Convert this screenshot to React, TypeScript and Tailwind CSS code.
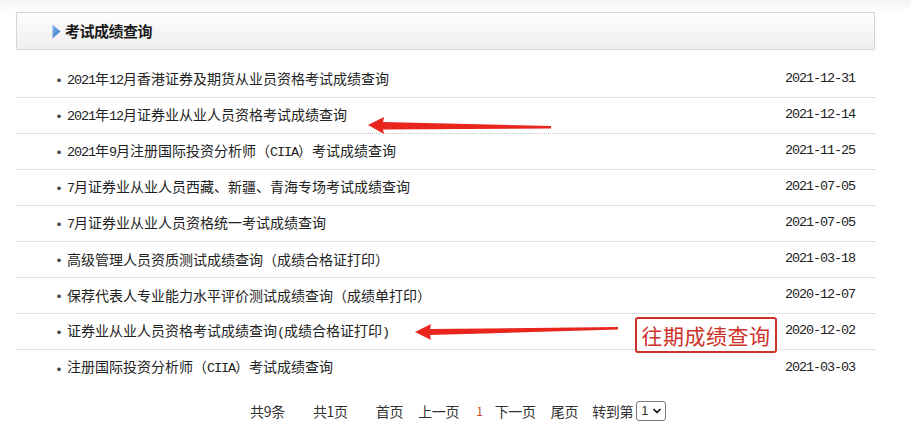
import { ChevronDown } from "lucide-react";

const items = [
  { title: "2021年12月香港证券及期货从业员资格考试成绩查询", date: "2021-12-31" },
  { title: "2021年12月证券业从业人员资格考试成绩查询", date: "2021-12-14" },
  { title: "2021年9月注册国际投资分析师（CIIA）考试成绩查询", date: "2021-11-25" },
  { title: "7月证券业从业人员西藏、新疆、青海专场考试成绩查询", date: "2021-07-05" },
  { title: "7月证券业从业人员资格统一考试成绩查询", date: "2021-07-05" },
  { title: "高级管理人员资质测试成绩查询（成绩合格证打印）", date: "2021-03-18" },
  { title: "保荐代表人专业能力水平评价测试成绩查询（成绩单打印）", date: "2020-12-07" },
  { title: "证券业从业人员资格考试成绩查询(成绩合格证打印)", date: "2020-12-02" },
  { title: "注册国际投资分析师（CIIA）考试成绩查询", date: "2021-03-03" },
];

// latin runs get the narrow mono face, like the old SimSun half-width glyphs
function MixedText({ text }: { text: string }) {
  const parts = text.match(/[\x20-\x7e]+|[^\x20-\x7e]+/g) || [];
  return (
    <>
      {parts.map((p, i) =>
        /^[\x20-\x7e]+$/.test(p) ? (
          <span key={i} className="font-['Liberation_Mono',monospace] text-[13.5px] tracking-[-1.1px]">
            {p}
          </span>
        ) : (
          <span key={i}>{p}</span>
        )
      )}
    </>
  );
}

export default function App() {
  return (
    <div className="relative w-[910px] h-[435px] bg-white overflow-hidden font-['Noto_Sans_CJK_SC',sans-serif] text-[#333]">
      <div className="bg-gradient-to-b from-[#f1f3f6] to-white h-[12px]" />
      <div className="ml-[16px] w-[859px]">
        {/* Section header */}
        <div className="h-[38px] border border-[#d5d5d5] bg-gradient-to-b from-[#fdfdfd] to-[#efeff1] flex items-center pl-[35px] shadow-[0_0_2px_rgba(0,0,0,0.06)]">
          <svg width="9" height="15" viewBox="0 0 9 15" className="mr-[4px]">
            <defs>
              <linearGradient id="tri" x1="0" y1="0" x2="1" y2="1">
                <stop offset="0" stopColor="#8ec0ef" />
                <stop offset="1" stopColor="#2a6cb8" />
              </linearGradient>
            </defs>
            <path d="M0.5 0.5 L8.5 7.5 L0.5 14.5 Z" fill="url(#tri)" />
          </svg>
          <span className="text-[15px] font-bold text-[#1a1a1a] tracking-[-0.5px]">考试成绩查询</span>
        </div>

        {/* List */}
        <ul className="mt-[12px]">
          {items.map((item, i) => (
            <li
              key={i}
              className={`h-[36px] flex items-center pl-[36px] pr-[20px] text-[14px] ${
                i < items.length - 1 ? "border-b border-dotted border-[#c4c4c4]" : ""
              }`}
            >
              <span className="w-[15px] text-[#444] font-bold">·</span>
              <span className="flex-1 text-[#222]">
                <MixedText text={item.title} />
              </span>
              <span className="font-['Liberation_Mono',monospace] text-[13.5px] tracking-[-1.1px] text-[#222]">
                {item.date}
              </span>
            </li>
          ))}
        </ul>
      </div>

      {/* Pagination */}
      <div className="mt-[13px] h-[24px] flex items-center text-[14px] text-[#333] pl-[250px] tracking-[-0.3px]">
        <span>共9条</span>
        <span className="ml-[28px]">共1页</span>
        <span className="ml-[28px]">首页</span>
        <span className="ml-[15px]">上一页</span>
        <span className="ml-[17px] text-[12px] text-[#c4502e]">1</span>
        <span className="ml-[12px]">下一页</span>
        <span className="ml-[15px]">尾页</span>
        <span className="ml-[14px]">转到第</span>
        <div className="ml-[3px] w-[30px] h-[20px] border border-[#7a7a7a] rounded-[3px] flex items-center justify-between pl-[4px] pr-[2px] bg-white">
          <span className="text-[13px] font-['Liberation_Sans',sans-serif]">1</span>
          <ChevronDown size={12} strokeWidth={3.5} className="text-[#111]" />
        </div>
      </div>

      {/* Annotation overlay */}
      <svg className="absolute left-0 top-0 pointer-events-none" width="910" height="435">
        <polygon
          points="368,125 384,117 383,122 551,126 551,128.5 383,129.5 384,134"
          fill="#e8261e"
        />
        <polygon
          points="415,332 431,324 430,329 618,327 618,329.5 430,335 431,340"
          fill="#e8261e"
        />
      </svg>
      <div className="absolute left-[635px] top-[317px] w-[142px] h-[36px] border-2 border-[#cc3229] rounded-[3px] bg-white flex items-center justify-center text-[21px] leading-none text-[#cc3229] tracking-[0.5px]">
        往期成绩查询
      </div>
    </div>
  );
}
